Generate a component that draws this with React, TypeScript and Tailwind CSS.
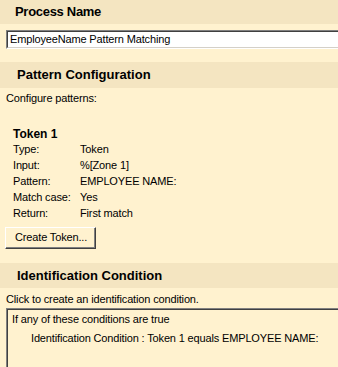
export default function App() {
  const body = { fontFamily: '"Liberation Sans", Arial, sans-serif', letterSpacing: "-0.15px" };
  const head = { fontFamily: '"Liberation Sans", Arial, sans-serif' };
  const rows: [string, string][] = [
    ["Type:", "Token"],
    ["Input:", "%[Zone 1]"],
    ["Pattern:", "EMPLOYEE NAME:"],
    ["Match case:", "Yes"],
    ["Return:", "First match"],
  ];
  return (
    <div className="w-[338px] h-[367px] overflow-hidden bg-[#FFF2CF] text-black text-[11px]" style={body}>
      <div className="h-[24px] bg-[#F4E5C1] flex items-center pl-[15px] font-bold text-[13px] tracking-[-0.3px]" style={head}>
        Process Name
      </div>
      <div className="pl-[6px] pt-[6px]">
        <div className="h-[19px] bg-white border-t border-l border-t-[#808080] border-l-[#808080] border-b border-b-[#ffffff]">
          <div className="h-full border-t border-l border-t-[#404040] border-l-[#404040] border-b border-b-[#d4d0c8] flex items-center pl-[2px] leading-none">
            EmployeeName Pattern Matching
          </div>
        </div>
      </div>
      <div className="mt-[13px] h-[26px] bg-[#F4E5C1] flex items-center pl-[17px] font-bold text-[13px] tracking-normal" style={head}>
        Pattern Configuration
      </div>
      <div className="pl-[6px] pt-[3px] leading-[14px]">Configure patterns:</div>
      <div className="pl-[13px] pt-[22px]">
        <div className="font-bold text-[12px] leading-[14px] tracking-normal" style={head}>Token 1</div>
        {rows.map(([k, v]) => (
          <div key={k} className="flex leading-[16px]">
            <div className="w-[67px]">{k}</div>
            <div>{v}</div>
          </div>
        ))}
      </div>
      <div className="pl-[5px] pt-[6px]">
        <div className="w-[91px] h-[22px] border border-t-white border-l-white border-b-[#404040] border-r-[#404040] bg-[#FFF2CF]">
          <div className="h-full border-b border-r border-b-[#808080] border-r-[#808080] flex items-center pl-[9px] leading-none">
            Create Token...
          </div>
        </div>
      </div>
      <div className="mt-[14px] h-[25px] bg-[#F4E5C1] flex items-center pl-[17px] font-bold text-[13px] tracking-normal" style={head}>
        Identification Condition
      </div>
      <div className="pl-[6px] pt-[4px] leading-[14px]">Click to create an identification condition.</div>
      <div className="pl-[6px] pt-[2px]">
        <div className="h-[80px] border-t border-l border-t-[#808080] border-l-[#808080]">
          <div className="h-full border-t border-l border-t-[#404040] border-l-[#404040] pl-[4px] pt-[1px]">
            <div className="leading-[16px]">If any of these conditions are true</div>
            <div className="pl-[19px] pt-[3px] leading-[16px]">Identification Condition : Token 1 equals EMPLOYEE NAME:</div>
          </div>
        </div>
      </div>
    </div>
  );
}
